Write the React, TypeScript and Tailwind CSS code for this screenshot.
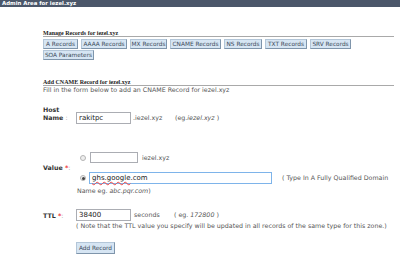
import React from "react";

type RecordTab = {
  id: number;
  name: string;
  width: string;
};

const tabs: RecordTab[] = [
  { id: 1, name: "A Records", width: "w-[35px]" },
  { id: 2, name: "AAAA Records", width: "w-[46px]" },
  { id: 3, name: "MX Records", width: "w-[37px]" },
  { id: 4, name: "CNAME Records", width: "w-[51px]" },
  { id: 5, name: "NS Records", width: "w-[38px]" },
  { id: 6, name: "TXT Records", width: "w-[42px]" },
  { id: 7, name: "SRV Records", width: "w-[41px]" },
];

function TabButton({ name, width }: { name: string; width: string }) {
  return (
    <div
      className={`${width} h-[10px] flex items-center justify-center bg-[#d6e5f3] border border-[#b3c6d8] border-r-[#7f95ab] border-b-[#7f95ab] text-[5.8px] text-[#3c4a5a] whitespace-nowrap`}
    >
      {name}
    </div>
  );
}

function Radio({ checked }: { checked?: boolean }) {
  return (
    <div className="w-[6px] h-[6px] rounded-full border border-[#b5b5b5] bg-[#eeeeee] flex items-center justify-center">
      {checked && <div className="w-[3px] h-[3px] rounded-full bg-[#444]" />}
    </div>
  );
}

function App() {
  return (
    <div className="w-[400px] h-[266px] bg-white overflow-hidden font-['DejaVu_Sans',sans-serif] text-[#555]">
      <div className="h-[7px] bg-[#4b576a] text-white font-bold text-[5.4px] leading-[7px] pl-[2px]">
        Admin Area for iezel.xyz
      </div>

      <div className="pl-[43px] pr-[6px]">
        <div className="mt-[23px] h-[7px] border-b border-[#a9a9a9] font-['Liberation_Serif',serif] font-bold text-[6px] leading-[6px] text-[#222]">
          Manage Records for iezel.xyz
        </div>
        <div className="mt-[2px] flex gap-[3px]">
          {tabs.map((t) => (
            <TabButton key={t.id} name={t.name} width={t.width} />
          ))}
        </div>
        <div className="mt-[1px] flex">
          <TabButton name="SOA Parameters" width="w-[51px]" />
        </div>

        <div className="mt-[19px] h-[7px] border-b border-[#a9a9a9] font-['Liberation_Serif',serif] font-bold text-[6px] leading-[6px] text-[#222]">
          Add CNAME Record for iezel.xyz
        </div>
        <div className="text-[6.3px] leading-[8px] text-[#555]">
          Fill in the form below to add an CNAME Record for iezel.xyz
        </div>

        {/* host */}
        <div className="mt-[11px] flex items-start">
          <div className="w-[33px] mt-[1px] font-bold text-[6.3px] leading-[8px] text-[#333]">
            <div>Host</div>
            <div>
              Name <span className="font-normal text-[#999]">:</span>
            </div>
          </div>
          <div className="mt-[7px] flex items-center">
            <div className="w-[55px] h-[12px] border border-[#abadb3] text-[7px] text-[#222] pl-[2px] leading-[10px]">
              rakitpc
            </div>
            <div className="ml-[2px] w-[42px] text-[6.3px]">.iezel.xyz</div>
            <div className="text-[6.3px]">
              (eg.<span className="italic">iezel.xyz</span> )
            </div>
          </div>
        </div>

        {/* value */}
        <div className="mt-[28px] flex items-center">
          <div className="w-[33px] font-bold text-[6.3px] text-[#333]">
            Value <span className="text-[#e33]">*</span>
            <span className="font-normal text-[#999]">:</span>
          </div>
          <div className="flex flex-col gap-[9px]">
            <div className="flex items-center">
              <div className="ml-[4px] w-[10px]">
                <Radio />
              </div>
              <div className="w-[48px] h-[11px] border border-[#abadb3]" />
              <div className="ml-[4px] text-[6.3px]">iezel.xyz</div>
            </div>
            <div className="flex items-center">
              <div className="ml-[4px] w-[9px]">
                <Radio checked />
              </div>
              <div className="w-[183px] h-[12px] border border-[#7eb4ea] text-[7px] text-[#222] pl-[2px] leading-[10px]">
                <span className="underline decoration-wavy decoration-[#e44] decoration-[0.5px]">ghs.google</span>
                .com
              </div>
              <div className="ml-[10px] text-[6.3px] whitespace-nowrap">
                ( Type In A Fully Qualified Domain
              </div>
            </div>
          </div>
        </div>
        <div className="pl-[34px] text-[6.3px] leading-[8px] mt-[3px]">
          Name eg. <span className="italic">abc.pqr.com</span>)
        </div>

        {/* ttl */}
        <div className="mt-[14px] flex items-start">
          <div className="w-[33px] mt-[2px] font-bold text-[6.3px] text-[#333]">
            TTL <span className="text-[#e33]">*</span>
            <span className="font-normal text-[#999]">:</span>
          </div>
          <div>
            <div className="flex items-center">
              <div className="w-[55px] h-[12px] border border-[#abadb3] text-[7px] text-[#222] pl-[2px] leading-[10px]">
                38400
              </div>
              <div className="ml-[3px] w-[40px] text-[6.3px]">seconds</div>
              <div className="text-[6.3px]">
                ( eg. <span className="italic">172800</span> )
              </div>
            </div>
            <div className="text-[6.3px] leading-[8px] mt-[1px] whitespace-nowrap">
              ( Note that the TTL value you specify will be updated in all records of the same type for this zone.)
            </div>
            <div className="mt-[12px] w-[39px] h-[12px] flex items-center justify-center bg-[#d6e5f3] border border-[#b3c6d8] border-r-[#7f95ab] border-b-[#7f95ab] text-[5.8px] text-[#3c4a5a]">
              Add Record
            </div>
          </div>
        </div>
      </div>
    </div>
  );
}

export default App;
